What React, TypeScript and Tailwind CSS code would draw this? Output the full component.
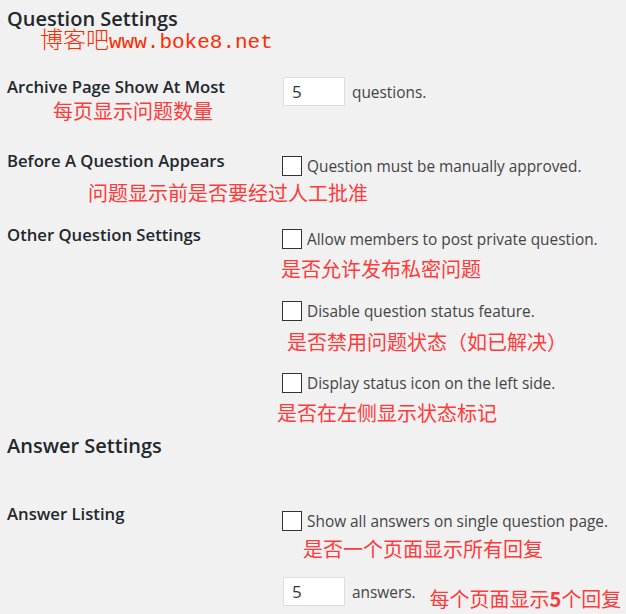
import React from "react";

const cjk = "font-['Noto_Sans_CJK_SC',sans-serif]";

function Box() {
  return <span className="block w-[20px] h-[20px] shrink-0 bg-white border border-[#333]" />;
}

function Option({ text }: { text: string }) {
  return (
    <div className="flex items-center h-[20px]">
      <Box />
      <span className="ml-[5px] mt-[2px] text-[15.4px] leading-[20px] text-[#444] whitespace-nowrap">{text}</span>
    </div>
  );
}

function Note({ text, className = "" }: { text: string; className?: string }) {
  return (
    <div className={`${cjk} text-[20px] leading-[24px] text-[#ff3a3a] whitespace-nowrap ${className}`}>{text}</div>
  );
}

function Label({ text }: { text: string }) {
  return <div className="text-[16.7px] leading-[22px] font-semibold text-[#23282d] whitespace-nowrap">{text}</div>;
}

function NumInput() {
  return (
    <div className="w-[62px] h-[29px] shrink-0 bg-white border border-[#ddd] flex items-center pl-[8px] text-[17px] text-[#32373c]">
      5
    </div>
  );
}

export default function App() {
  return (
    <div className="w-[626px] h-[614px] overflow-hidden bg-[#f1f1f1] pl-[7px] pt-[5px] font-['Open_Sans',sans-serif]">
      <div className="relative">
        <h2 className="text-[20px] leading-[28px] font-semibold text-[#23282d]">Question Settings</h2>
        <div className="absolute left-[33px] top-[19px] whitespace-nowrap text-[#ff2a00]">
          <span className="font-['Noto_Sans_CJK_SC',serif] text-[23px] leading-[28px] font-light">博客吧</span>
          <span className="font-['Liberation_Mono',monospace] text-[21px] leading-[28px]">www.boke8.net</span>
        </div>
      </div>

      <div className="mt-[43px] flex">
        <div className="w-[276px] shrink-0">
          <Label text="Archive Page Show At Most" />
          <Note text="每页显示问题数量" className="mt-[1px] ml-[46px]" />
        </div>
        <div className="flex items-center mt-[1px] h-[29px]">
          <NumInput />
          <span className="ml-[7px] mt-[3px] text-[15.4px] text-[#444]">questions.</span>
        </div>
      </div>

      <div className="mt-[27px] flex">
        <div className="w-[275px] shrink-0">
          <Label text="Before A Question Appears" />
        </div>
        <div className="mt-[6px]">
          <Option text="Question must be manually approved." />
        </div>
      </div>
      <Note text="问题显示前是否要经过人工批准" className="mt-[5px] ml-[81px]" />

      <div className="mt-[19px] flex">
        <div className="w-[275px] shrink-0">
          <Label text="Other Question Settings" />
        </div>
        <div className="pt-[5px]">
          <Option text="Allow members to post private question." />
          <Note text="是否允许发布私密问题" className="mt-[8px] -ml-[1px]" />
          <div className="mt-[20px]">
            <Option text="Disable question status feature." />
          </div>
          <Note text="是否禁用问题状态（如已解决）" className="mt-[9px] ml-[5px]" />
          <div className="mt-[19px]">
            <Option text="Display status icon on the left side." />
          </div>
          <Note text="是否在左侧显示状态标记" className="mt-[8px] -ml-[5px]" />
        </div>
      </div>

      <h2 className="mt-[7px] text-[20px] leading-[28px] font-semibold text-[#23282d]">Answer Settings</h2>

      <div className="mt-[43px] flex">
        <div className="w-[275px] shrink-0">
          <Label text="Answer Listing" />
        </div>
        <div className="pt-[8px]">
          <Option text="Show all answers on single question page." />
          <Note text="是否一个页面显示所有回复" className="mt-[6px] ml-[21px]" />
          <div className="mt-[16px] flex items-start">
            <div className="ml-[1px]">
              <NumInput />
            </div>
            <span className="ml-[7px] mt-[6px] text-[15.4px] leading-[20px] text-[#444]">answers.</span>
            <div className={`${cjk} ml-[14px] mt-[10px] text-[20px] leading-[24px] text-[#ff3a3a] whitespace-nowrap`}>
              每个页面显示<span className="font-bold">5</span>个回复
            </div>
          </div>
        </div>
      </div>
    </div>
  );
}
